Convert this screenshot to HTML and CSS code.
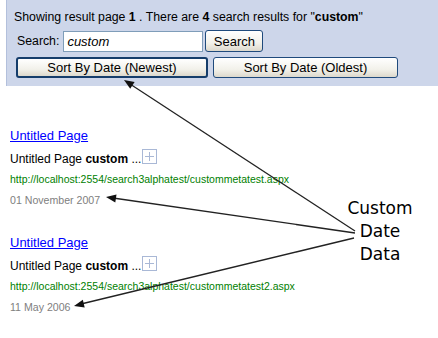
FILE: index.html
```html
<!DOCTYPE html>
<html lang="en">
<head>
    <meta charset="UTF-8">
    <title>Search Results</title>
    <link rel="stylesheet" href="styles.css">
</head>
<body>
    <div class="panel">
        <div class="summary">Showing result page <b>1</b> . There are <b>4</b> search results for "<b>custom</b>"</div>
        <div class="search-row">
            <label for="q">Search:</label>
            <input id="q" class="search-input" type="text" value="custom">
            <button class="btn btn-search">Search</button>
        </div>
        <div class="sort-row">
            <button class="btn btn-sort btn-focus">Sort By Date (Newest)</button>
            <button class="btn btn-sort btn-oldest">Sort By Date (Oldest)</button>
        </div>
    </div>

    <div class="results">
        <div class="result">
            <a class="result-title" href="#">Untitled Page</a>
            <div class="snippet">Untitled Page <b>custom</b> ...<svg class="expand" width="15" height="15" viewBox="0 0 15 15"><rect x="0.5" y="0.5" width="14" height="14" fill="#fff" stroke="#a9b8d6"/><path d="M7.5 3v9M3 7.5h9" stroke="#a9b8d6" stroke-width="1"/></svg></div>
            <div class="url">http://localhost:2554/search3alphatest/custommetatest.aspx</div>
            <div class="date">01 November 2007</div>
        </div>
        <div class="result">
            <a class="result-title" href="#">Untitled Page</a>
            <div class="snippet">Untitled Page <b>custom</b> ...<svg class="expand" width="15" height="15" viewBox="0 0 15 15"><rect x="0.5" y="0.5" width="14" height="14" fill="#fff" stroke="#a9b8d6"/><path d="M7.5 3v9M3 7.5h9" stroke="#a9b8d6" stroke-width="1"/></svg></div>
            <div class="url">http://localhost:2554/search3alphatest/custommetatest2.aspx</div>
            <div class="date">11 May 2006</div>
        </div>
    </div>

    <!-- annotation overlay -->
    <svg class="arrows" width="438" height="338" viewBox="0 0 438 338">
        <g stroke="#222" stroke-width="1.3" fill="none">
            <line x1="355" y1="231" x2="130" y2="84"/>
            <line x1="355" y1="233" x2="113" y2="198"/>
            <line x1="354" y1="238" x2="81" y2="304"/>
        </g>
        <g fill="#111">
            <polygon points="124,80 130.2,88.8 134.6,82.1"/>
            <polygon points="106,197 115.3,202.4 116.5,194.5"/>
            <polygon points="74,306 84.7,307.5 82.8,299.7"/>
        </g>
    </svg>
    <div class="note">Custom<br>Date<br>Data</div>
</body>
</html>
```

FILE: styles.css
```css
body {
    margin: 0;
    width: 438px;
    height: 338px;
    overflow: hidden;
    position: relative;
    background: #fff;
    font-family: "Liberation Sans", Arial, sans-serif;
    font-size: 13px;
    color: #000;
}
.panel {
    margin-left: 6px;
    height: 86px;
    box-sizing: border-box;
    padding: 10px 0 0 7px;
    background: #cdd6ea;
    border-left: 1px solid #b3c0dc;
    font-size: 12.3px;
}
.summary {
    line-height: 15px;
}
.search-row {
    display: flex;
    align-items: center;
    height: 22px;
    margin-top: 5px;
}
.search-row label {
    margin-left: 3px;
    margin-right: 4px;
}
.search-input {
    width: 140px;
    height: 21px;
    box-sizing: border-box;
    border: 1px solid #7f9db9;
    padding: 0 3px;
    font-family: inherit;
    font-size: 13px;
    font-style: italic;
    outline: none;
}
.btn {
    height: 22px;
    box-sizing: border-box;
    border: 1px solid #1f4a7c;
    border-radius: 3px;
    background: linear-gradient(#ffffff, #f2f1ea 60%, #dcd8cc);
    font-family: inherit;
    font-size: 13px;
    color: #000;
    padding: 0;
}
.btn-search {
    width: 58px;
    margin-left: 2px;
}
.sort-row {
    display: flex;
    margin-top: 5px;
    padding-left: 2px;
}
.btn-sort {
    height: 21px;
}
.btn-focus {
    width: 192px;
    border: 2px solid #153d6b;
}
.btn-oldest {
    width: 185px;
    margin-left: 5px;
}
.results {
    margin-top: 42px;
    padding-left: 10px;
}
.result {
    margin-bottom: 28px;
}
.result-title {
    display: block;
    line-height: 16px;
    color: #0000ff;
}
.snippet {
    margin-top: 7px;
    font-size: 12px;
    line-height: 16px;
}
.expand {
    vertical-align: top;
    margin-top: -2px;
    margin-left: 1px;
}
.url {
    margin-top: 6px;
    font-size: 10.5px;
    line-height: 13px;
    color: #008000;
}
.date {
    margin-top: 8px;
    font-size: 10.6px;
    line-height: 13px;
    color: #808080;
}
.arrows {
    position: absolute;
    left: 0;
    top: 0;
    pointer-events: none;
}
.note {
    position: absolute;
    left: 330px;
    top: 197px;
    width: 100px;
    text-align: center;
    font-family: "DejaVu Sans", sans-serif;
    font-size: 17px;
    line-height: 23px;
    color: #000;
}
```
